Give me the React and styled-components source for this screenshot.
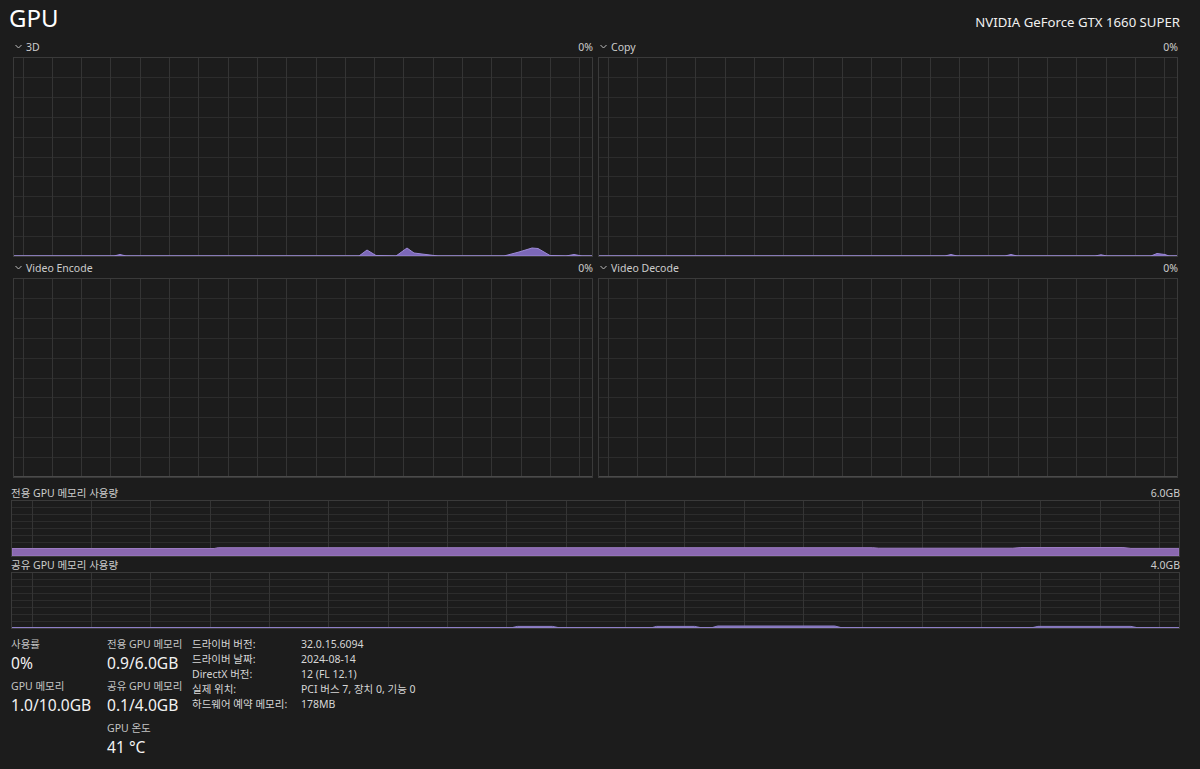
import React from 'react';
import styled, { createGlobalStyle } from 'styled-components';

const Global = createGlobalStyle`
  html, body { margin: 0; padding: 0; background: #1c1c1c; }
  body {
    font-family: "Noto Sans", "Noto Sans CJK KR", sans-serif;
    color: #e8e8e8;
  }
`;

const Page = styled.div`
  width: 1200px;
  height: 769px;
  box-sizing: border-box;
  padding: 0 20px 0 11px;
  display: flex;
  flex-direction: column;
  overflow: hidden;
  background: #1c1c1c;
`;

const Header = styled.header`
  height: 36px;
  display: flex;
  align-items: flex-start;
  justify-content: space-between;
`;

const Title = styled.h1`
  margin: 2px 0 0 -2px;
  font-size: 24px;
  font-weight: 400;
  line-height: 32px;
  color: #ffffff;
`;

const DeviceName = styled.div`
  margin-top: 13px;
  font-size: 13.2px;
  line-height: 18px;
  color: #f0f0f0;
`;

const ChartGrid = styled.div`
  display: grid;
  grid-template-columns: 1fr 1fr;
  column-gap: 5px;
  padding: 0 2px;
`;

const Panel = styled.section`
  display: flex;
  flex-direction: column;
`;

const LabelRow = styled.div`
  height: ${p => p.$h || 21}px;
  display: flex;
  align-items: center;
  justify-content: space-between;
  font-size: 10.5px;
  line-height: 14px;
  color: #cccccc;
`;

const LabelLeft = styled.span`
  display: flex;
  align-items: center;
  gap: 4px;
  padding-left: ${p => p.$pad ?? 2}px;
`;

const ChartBox = styled.div`
  height: ${p => p.$h}px;
  box-sizing: border-box;
  border: 1px solid #3a3a3a;
  background: #1c1c1c;
  & > svg { display: block; width: 100%; height: 100%; }
`;

const MemSection = styled.section`
  display: flex;
  flex-direction: column;
  margin-top: 7px;
`;

const Stats = styled.div`
  display: flex;
  align-items: flex-start;
  margin-top: 8px;
`;

const StatCol = styled.div`
  width: ${p => p.$w}px;
  display: flex;
  flex-direction: column;
  gap: 5px;
`;

const Stat = styled.div`
  display: flex;
  flex-direction: column;
`;

const StatLabel = styled.div`
  font-size: 10.5px;
  line-height: 15px;
  color: #c4c4c4;
`;

const StatValue = styled.div`
  font-size: 15.6px;
  line-height: 22px;
  color: #f2f2f2;
`;

const InfoTable = styled.div`
  display: grid;
  grid-template-columns: 109px auto;
  align-content: start;
  font-size: 10.5px;
  line-height: 15px;
  color: #d6d6d6;
`;

const Chevron = () => (
  <svg width="7" height="5" viewBox="0 0 7 5">
    <polyline points="0.5,1 3.5,4 6.5,1" fill="none" stroke="#bdbdbd" strokeWidth="1" />
  </svg>
);

function buildArea(points, w, h) {
  if (!points.length) return '';
  let d = `M0,${h}`;
  points.forEach(([x, v]) => {
    d += ` L${x},${h - v}`;
  });
  d += ` L${w},${h} Z`;
  return d;
}

const Chart = ({ w, h, step, offset, rows, segments = [], fill, stroke, baseline }) => {
  const v = [];
  for (let x = offset; x < w; x += step) v.push(x);
  const hl = [];
  for (let i = 1; i < rows; i++) hl.push((h / rows) * i);
  return (
    <ChartBox $h={h + 2}>
      <svg viewBox={`0 0 ${w} ${h}`} preserveAspectRatio="none">
        {hl.map((y, i) => (
          <line key={'h' + i} x1="0" x2={w} y1={y} y2={y} stroke="#2c2c2c" strokeWidth="1" vectorEffect="non-scaling-stroke" shapeRendering="crispEdges" />
        ))}
        {v.map((x, i) => (
          <line key={'v' + i} x1={x} x2={x} y1="0" y2={h} stroke="#343434" strokeWidth="1" vectorEffect="non-scaling-stroke" shapeRendering="crispEdges" />
        ))}
        {baseline && (
          <line x1="0" x2={w} y1={h - 0.5} y2={h - 0.5} stroke={baseline} strokeWidth="1" vectorEffect="non-scaling-stroke" />
        )}
        {segments.map((pts, i) => (
          <path key={'s' + i} d={buildArea(pts, w, h)} fill={fill} stroke={stroke} strokeWidth="1" vectorEffect="non-scaling-stroke" />
        ))}
      </svg>
    </ChartBox>
  );
};

const MAIN_W = 578;
const MAIN_H = 198;

const seg3D = [
  [[0, 0], [100, 0], [106, 1.5], [112, 0], [345, 0], [353, 6], [362, 0.5], [382, 0], [393, 8], [400, 3], [412, 1.5], [424, 0], [490, 0], [505, 4], [518, 8], [524, 7.5], [536, 0.5], [552, 0], [560, 1.5], [568, 0], [578, 0]],
];

const segCopy = [
  [[0, 0], [346, 0], [352, 1.5], [358, 0], [406, 0], [412, 1.5], [418, 0], [496, 0], [502, 1.2], [508, 0], [552, 0], [558, 2.5], [566, 1.5], [570, 0], [578, 0]],
];

const MEM_W = 1166;
const MEM_H = 55;

const segDedicated = [
  [[0, 0], [0, 7.5], [202, 7.5], [206, 8.3], [860, 8.3], [866, 7.8], [1000, 7.8], [1008, 8.5], [1110, 8.5], [1118, 7.6], [1166, 7.6], [1166, 0]],
];

const segShared = [
  [[498, 0], [505, 1.6], [540, 1.6], [548, 0]],
  [[638, 0], [644, 1.6], [682, 1.6], [690, 0]],
  [[698, 0], [705, 2], [822, 2], [830, 0]],
  [[1018, 0], [1025, 1.6], [1118, 1.6], [1126, 0]],
];

const GPU_FILL = '#7c68b8';
const GPU_STROKE = '#9d8ad8';
const MEM_FILL = '#8a68b0';
const MEM_STROKE = '#9c7cc2';

const ChartPanel = ({ label, value, segments }) => (
  <Panel>
    <LabelRow>
      <LabelLeft><Chevron />{label}</LabelLeft>
      <span>{value}</span>
    </LabelRow>
    <Chart w={MAIN_W} h={MAIN_H} step={29.3} offset={9} rows={10} segments={segments} fill={GPU_FILL} stroke={GPU_STROKE} baseline="#4a4a4a" />
  </Panel>
);

export default function App() {
  return (
    <>
      <Global />
      <Page>
        <Header>
          <Title>GPU</Title>
          <DeviceName>NVIDIA GeForce GTX 1660 SUPER</DeviceName>
        </Header>

        <ChartGrid>
          <ChartPanel label="3D" value="0%" segments={seg3D} />
          <ChartPanel label="Copy" value="0%" segments={segCopy} />
          <ChartPanel label="Video Encode" value="0%" segments={[]} />
          <ChartPanel label="Video Decode" value="0%" segments={[]} />
        </ChartGrid>

        <MemSection>
          <LabelRow $h={15}>
            <LabelLeft $pad={0}>전용 GPU 메모리 사용량</LabelLeft>
            <span>6.0GB</span>
          </LabelRow>
          <Chart w={MEM_W} h={MEM_H} step={59.3} offset={20} rows={8} segments={segDedicated} fill={MEM_FILL} stroke={MEM_STROKE} />
          <LabelRow $h={15}>
            <LabelLeft $pad={0}>공유 GPU 메모리 사용량</LabelLeft>
            <span>4.0GB</span>
          </LabelRow>
          <Chart w={MEM_W} h={MEM_H} step={59.3} offset={20} rows={8} segments={segShared} fill="#7a6cb0" stroke="#8e80c8" baseline="#3e3e3e" />
        </MemSection>

        <Stats>
          <StatCol $w={96}>
            <Stat>
              <StatLabel>사용률</StatLabel>
              <StatValue>0%</StatValue>
            </Stat>
            <Stat>
              <StatLabel>GPU 메모리</StatLabel>
              <StatValue>1.0/10.0GB</StatValue>
            </Stat>
          </StatCol>
          <StatCol $w={85}>
            <Stat>
              <StatLabel>전용 GPU 메모리</StatLabel>
              <StatValue>0.9/6.0GB</StatValue>
            </Stat>
            <Stat>
              <StatLabel>공유 GPU 메모리</StatLabel>
              <StatValue>0.1/4.0GB</StatValue>
            </Stat>
            <Stat>
              <StatLabel>GPU 온도</StatLabel>
              <StatValue>41 °C</StatValue>
            </Stat>
          </StatCol>
          <InfoTable>
            <span>드라이버 버전:</span><span>32.0.15.6094</span>
            <span>드라이버 날짜:</span><span>2024-08-14</span>
            <span>DirectX 버전:</span><span>12 (FL 12.1)</span>
            <span>실제 위치:</span><span>PCI 버스 7, 장치 0, 기능 0</span>
            <span>하드웨어 예약 메모리:</span><span>178MB</span>
          </InfoTable>
        </Stats>
      </Page>
    </>
  );
}
